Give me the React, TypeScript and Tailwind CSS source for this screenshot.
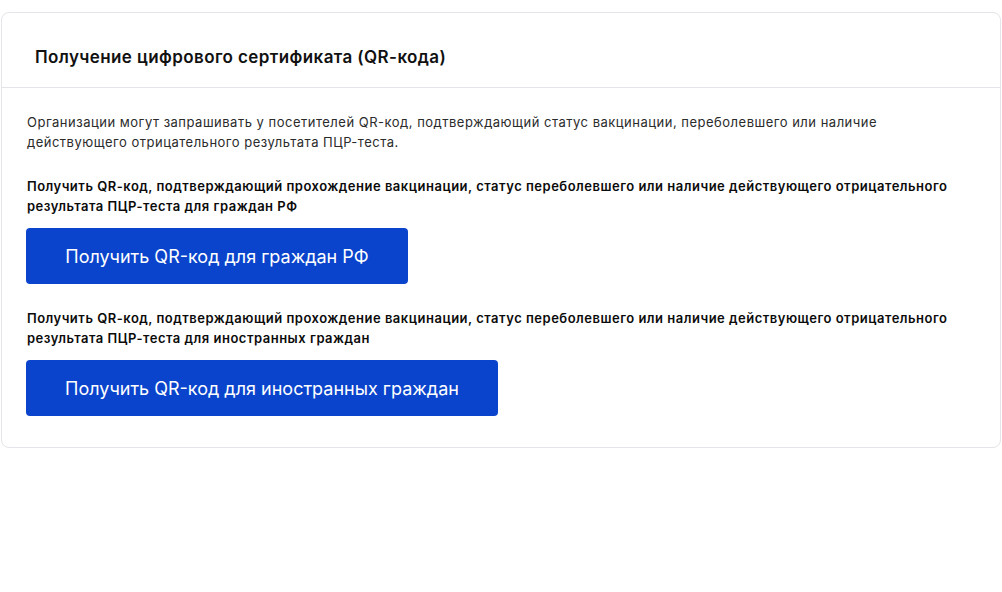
import React from "react";

export default function App() {
  const font = { fontFamily: "Inter, 'Noto Sans', sans-serif" };
  return (
    <div className="w-[1002px] h-[592px] bg-white" style={font}>
      <div className="pt-[12px] pl-[1px] pr-[1px]">
        <div className="border border-[#e3e5e8] rounded-[8px] bg-white">
          <div className="h-[75px] pt-[16px] flex items-center pl-[33px] border-b border-[#e3e5e8]">
            <h1 className="text-[17px] font-semibold text-[#111111] tracking-[0.4px]">
              Получение цифрового сертификата (QR-кода)
            </h1>
          </div>
          <div className="pl-[24px] pr-[24px] pt-[24px] pb-[31px]">
            <p className="pl-[1px] text-[13px] leading-[20px] text-[#2b2b2b] tracking-[0.5px] w-[880px]">
              Организации могут запрашивать у посетителей QR-код, подтверждающий статус вакцинации, переболевшего или наличие действующего отрицательного результата ПЦР-теста.
            </p>
            <p className="pl-[1px] mt-[24px] text-[13px] leading-[20px] font-semibold text-[#0b0b0b] tracking-[0.5px] w-[940px]">
              Получить QR-код, подтверждающий прохождение вакцинации, статус переболевшего или наличие действующего отрицательного результата ПЦР-теста для граждан РФ
            </p>
            <button className="mt-[12px] w-[382px] h-[56px] rounded-[4px] bg-[#0a44cc] text-white text-[18px] flex items-center justify-center">
              Получить QR-код для граждан РФ
            </button>
            <p className="pl-[1px] mt-[24px] text-[13px] leading-[20px] font-semibold text-[#0b0b0b] tracking-[0.5px] w-[940px]">
              Получить QR-код, подтверждающий прохождение вакцинации, статус переболевшего или наличие действующего отрицательного результата ПЦР-теста для иностранных граждан
            </p>
            <button className="mt-[12px] w-[472px] h-[56px] rounded-[4px] bg-[#0a44cc] text-white text-[18px] flex items-center justify-center">
              Получить QR-код для иностранных граждан
            </button>
          </div>
        </div>
      </div>
    </div>
  );
}
